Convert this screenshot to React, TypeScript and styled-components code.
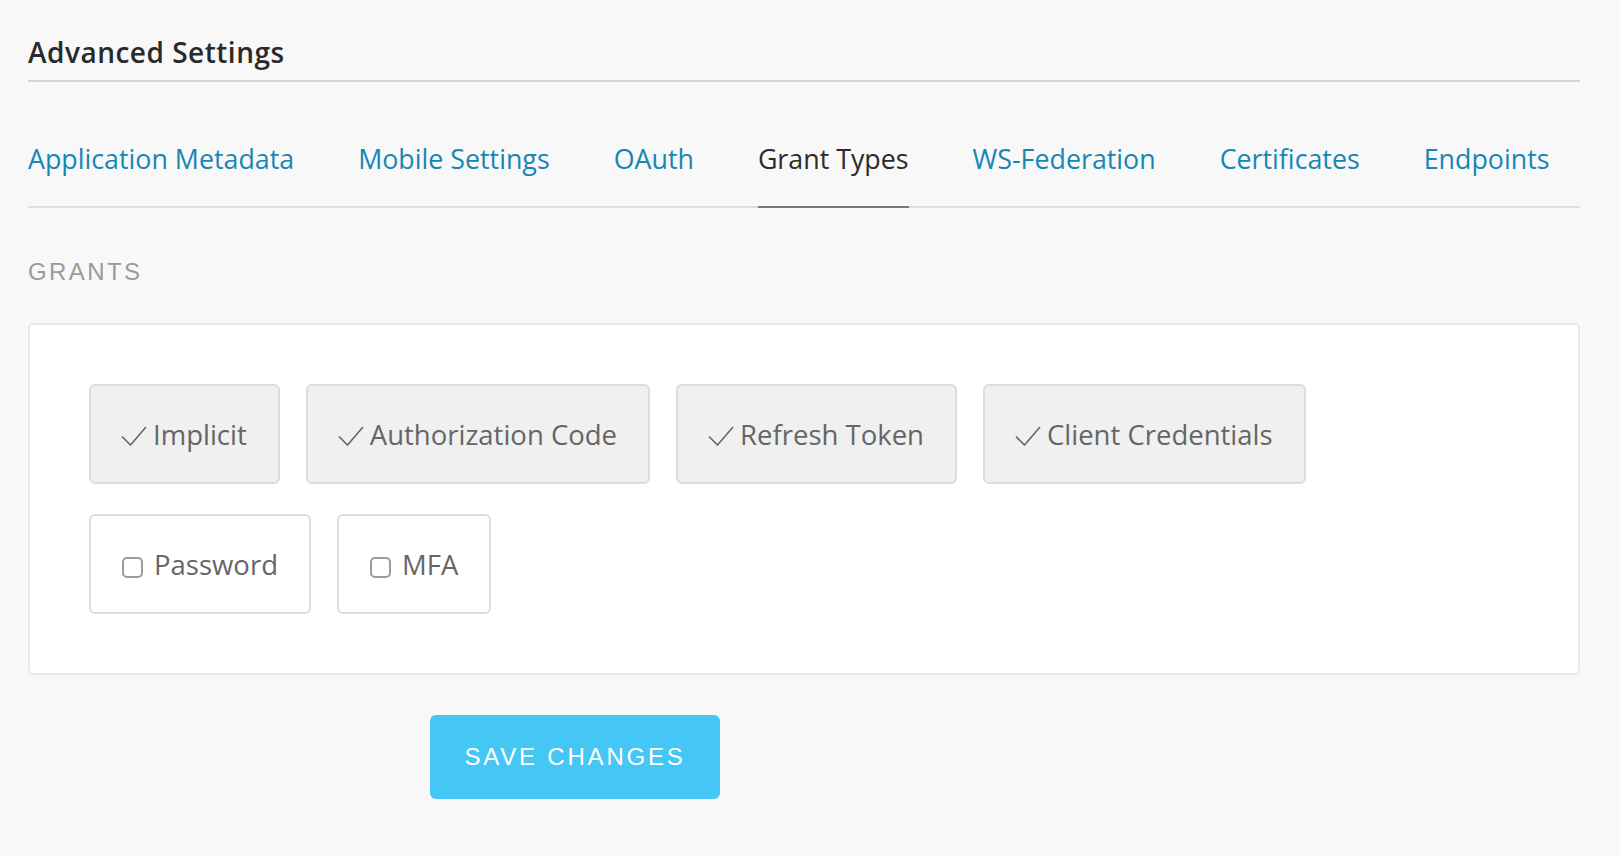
import React, { FC } from 'react';
import styled, { createGlobalStyle } from 'styled-components';

const GlobalStyle = createGlobalStyle`
  html, body {
    margin: 0;
    padding: 0;
    background: #f8f8f8;
  }

  body {
    font-family: 'Open Sans', 'Liberation Sans', Arial, sans-serif;
    color: #333;
  }
`;

const Page = styled.div`
  padding: 0 40px 40px 28px;
`;

const Heading = styled.h2`
  margin: 0;
  padding: 32px 0 8px;
  font-size: 28px;
  line-height: 40px;
  font-weight: 600;
  letter-spacing: 0.5px;
  color: #2a2a2a;
  border-bottom: 2px solid #d6d6d6;
`;

const TabBar = styled.nav`
  display: flex;
  gap: 64px;
  border-bottom: 2px solid #dedede;
`;

const Tab = styled.a<{ $active?: boolean }>`
  display: block;
  padding: 57px 0 27px;
  margin-bottom: -2px;
  font-size: 26.8px;
  line-height: 40px;
  text-decoration: none;
  white-space: nowrap;
  cursor: pointer;
  color: ${({ $active }) => ($active ? '#2b2b2b' : '#1786b4')};
  border-bottom: 2px solid ${({ $active }) => ($active ? '#7a7a7a' : 'transparent')};
`;

const SectionLabel = styled.h3`
  margin: 49px 0 36px;
  font-family: 'Liberation Sans', Arial, sans-serif;
  font-size: 24px;
  line-height: 30px;
  font-weight: 400;
  letter-spacing: 2.4px;
  color: #9a9a9a;
`;

const Card = styled.div`
  background: #fff;
  border: 2px solid #e9e9e9;
  border-radius: 5px;
  padding: 59px;
`;

const GrantList = styled.div`
  display: flex;
  flex-wrap: wrap;
  gap: 30px 26px;
`;

const Grant = styled.label<{ $checked: boolean }>`
  box-sizing: border-box;
  height: 100px;
  display: flex;
  align-items: center;
  padding: 0 31px 0 30px;
  border: 2px solid #dcdcdc;
  border-radius: 6px;
  background: ${({ $checked }) => ($checked ? '#f0f0f0' : '#fff')};
  font-size: 27.5px;
  color: #666;
  white-space: nowrap;
  cursor: pointer;
`;

const CheckMark = styled.svg`
  width: 26px;
  height: 20px;
  margin: 4px 6px 0 0;
  flex: none;
`;

const Box = styled.span`
  box-sizing: border-box;
  width: 21px;
  height: 21px;
  margin: 6px 11px 0 1px;
  border: 2px solid #9c9c9c;
  border-radius: 5px;
  background: #fff;
  flex: none;
`;

const SaveButton = styled.button`
  margin: 40px 0 0 402px;
  width: 290px;
  height: 84px;
  border: none;
  border-radius: 6px;
  background: #45c7f5;
  color: #fff;
  font-family: 'Liberation Sans', Arial, sans-serif;
  font-size: 24px;
  letter-spacing: 2.8px;
  text-transform: uppercase;
  cursor: pointer;
`;

const tabs = [
  'Application Metadata',
  'Mobile Settings',
  'OAuth',
  'Grant Types',
  'WS-Federation',
  'Certificates',
  'Endpoints',
];

const grants = [
  { name: 'Implicit', checked: true },
  { name: 'Authorization Code', checked: true },
  { name: 'Refresh Token', checked: true },
  { name: 'Client Credentials', checked: true },
  { name: 'Password', checked: false },
  { name: 'MFA', checked: false },
];

const Check: FC = () => (
  <CheckMark viewBox="0 0 26 20">
    <path d="M1 10.5 L9.5 19 L25 1" fill="none" stroke="#666" strokeWidth="1.6" />
  </CheckMark>
);

const App: FC = () => {
  return (
    <>
      <GlobalStyle />
      <Page>
        <Heading>Advanced Settings</Heading>
        <TabBar>
          {tabs.map((title) => (
            <Tab key={title} $active={title === 'Grant Types'}>
              {title}
            </Tab>
          ))}
        </TabBar>
        <SectionLabel>GRANTS</SectionLabel>
        <Card>
          <GrantList>
            {grants.map(({ name, checked }) => (
              <Grant key={name} $checked={checked}>
                {checked ? <Check /> : <Box />}
                {name}
              </Grant>
            ))}
          </GrantList>
        </Card>
        <SaveButton>Save Changes</SaveButton>
      </Page>
    </>
  );
};

export default App;
